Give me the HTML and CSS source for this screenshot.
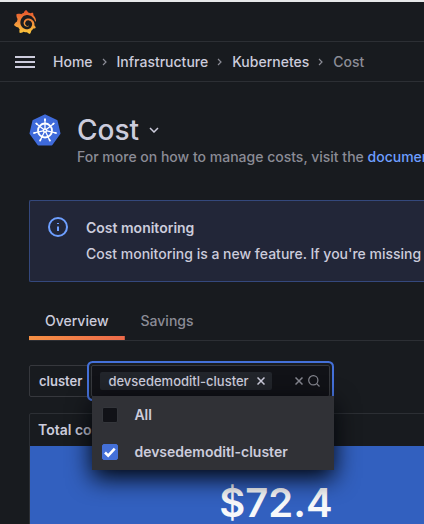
FILE: index.html
```html
<!DOCTYPE html>
<html lang="en">
<head>
<meta charset="utf-8">
<meta name="viewport" content="width=device-width, initial-scale=1">
<title>Cost - Kubernetes - Grafana</title>
<link rel="stylesheet" href="styles.css">
</head>
<body>
<header class="chrome">
  <div class="topbar">
    <a class="brand" href="#" aria-label="Grafana">
      <svg width="24" height="24" viewBox="0 0 351 365">
        <defs><linearGradient id="flame" x1="0" y1="1" x2="0" y2="0"><stop offset="0" stop-color="#fbca3a"/><stop offset="0.45" stop-color="#f3933c"/><stop offset="1" stop-color="#e5502b"/></linearGradient></defs>
        <path fill="url(#flame)" d="M342,161.2c-0.6-6.1-1.6-13.1-3.6-20.9c-2-7.7-5-16.2-9.4-25c-4.4-8.8-10.1-17.9-17.5-26.8c-2.9-3.5-6.1-6.9-9.5-10.2c5.1-20.3-6.2-37.9-6.2-37.9c-19.5-1.2-31.9,6.1-36.5,9.4c-0.8-0.3-1.5-0.7-2.3-1c-3.3-1.3-6.7-2.6-10.3-3.7c-3.5-1.1-7.1-2.1-10.8-3c-3.7-0.9-7.4-1.6-11.2-2.2c-0.7-0.1-1.3-0.2-2-0.3c-8.5-27.2-32.9-38.6-32.9-38.6c-27.3,17.3-32.4,41.5-32.4,41.5s-0.1,0.5-0.3,1.4c-1.5,0.4-3,0.9-4.5,1.3c-2.1,0.6-4.2,1.4-6.2,2.2c-2.1,0.8-4.1,1.6-6.2,2.5c-4.1,1.8-8.2,3.8-12.2,6c-3.9,2.2-7.7,4.6-11.4,7.1c-0.5-0.2-1-0.4-1-0.4c-37.8-14.4-71.3,2.9-71.3,2.9c-3.1,40.2,15.1,65.5,18.7,70.1c-0.9,2.5-1.7,5-2.5,7.5c-2.8,9.1-4.9,18.4-6.2,28.1c-0.2,1.4-0.4,2.8-0.5,4.2C18.8,192.7,8.5,228,8.5,228c29.1,33.5,63.1,35.6,63.1,35.6c0,0,0.1-0.1,0.1-0.1c4.3,7.7,9.3,15,14.9,21.9c2.4,2.9,4.8,5.6,7.4,8.3c-10.6,30.4,1.5,55.6,1.5,55.6c32.4,1.2,53.7-14.2,58.2-17.7c3.2,1.1,6.5,2.1,9.8,2.9c10,2.6,20.2,4.1,30.4,4.5c2.5,0.1,5.1,0.2,7.6,0.1l1.2,0l0.8,0l1.6,0l1.6-0.1l0,0.1c15.3,21.8,42.1,24.9,42.1,24.9c19.1-20.1,20.2-40.1,20.2-44.4l0,0c0,0,0-0.1,0-0.3c0-0.4,0-0.6,0-0.6l0,0c0-0.3,0-0.6,0-0.9c4-2.8,7.8-5.8,11.4-9.1c7.6-6.9,14.3-14.8,19.9-23.3c0.5-0.8,1-1.6,1.5-2.4c21.6,1.2,36.9-13.4,36.9-13.4c-3.6-22.5-16.4-33.5-19.1-35.6c-0.3-0.2-0.7-0.5-1-0.7c0.1-1.4,0.2-2.7,0.3-4.1c0.2-2.4,0.2-4.9,0.2-7.3l0-1.8l0-1.4l-0.1-2.1l-0.1-2c0-0.7-0.1-1.3-0.2-1.9c-0.1-0.6-0.1-1.3-0.2-1.9l-0.2-1.9l-0.3-1.9c-0.4-2.5-0.8-4.9-1.4-7.4c-2.3-9.7-6.1-18.9-11-27.2c-5-8.3-11.2-15.6-18.3-21.8c-7-6.2-14.9-11.2-23.1-14.9c-8.3-3.7-16.9-6.1-25.5-7.2c-4.3-0.6-8.6-0.8-12.9-0.7l-3.2,0l-1.6,0.1c-0.6,0-1.2,0.1-1.7,0.1c-2.2,0.2-4.4,0.5-6.5,0.9c-8.6,1.6-16.7,4.7-23.8,9c-7.1,4.3-13.3,9.6-18.3,15.6c-5,6-8.9,12.7-11.6,19.6c-2.7,6.9-4.2,14.1-4.6,21c-0.1,1.7-0.1,3.5-0.1,5.2l0.1,2.7c0.1,0.8,0.1,1.7,0.2,2.5c0.3,3.5,1,6.9,1.9,10.1c1.9,6.5,4.9,12.4,8.6,17.4c3.7,5,8.2,9.1,12.9,12.4c4.7,3.2,9.8,5.5,14.8,7c5,1.5,10,2.1,14.7,2.1c3,0,6-0.2,9-0.9c4-0.9,8-2.2,11.5-4.1c1.8-0.9,3.4-2,5-3c0.4-0.3,0.9-0.6,1.3-1c1.6-1.3,1.9-3.7,0.6-5.3c-1.1-1.4-3.1-1.8-4.7-0.9c-0.4,0.2-0.8,0.4-1.2,0.6c-1.4,0.7-2.8,1.3-4.3,1.8c-1.5,0.5-3.1,0.9-4.7,1.2c-3,0.4-6,0.5-9,0.2c-3.7-0.5-7.4-1.6-10.9-3.2c-3.6-1.6-7-3.8-10.1-6.6c-3.1-2.8-5.8-6.1-7.9-9.9c-2.1-3.8-3.6-8-4.3-12.4c-0.3-2.2-0.5-4.5-0.4-6.7c0.1-2.4,0.4-4.8,0.8-7.1c1.7-9.6,6.5-19,13.9-26.1c1.9-1.8,3.9-3.4,6-4.9c2.1-1.5,4.4-2.8,6.8-3.9c2.4-1.1,4.8-2,7.4-2.7c2.5-0.7,5.1-1.1,7.8-1.4c3-0.2,5.5-0.2,8.2-0.1c2.9,0.2,5.7,0.6,8.5,1.3c5.6,1.2,11.1,3.3,16.2,6.1c10.2,5.7,18.9,14.5,24.2,25.1c2.7,5.3,4.6,11,5.5,16.9c0.6,4.6,0.8,8.8,0.6,13.5c-0.1,1.6-0.3,3.3-0.5,4.9c-0.2,1.6-0.5,3.2-0.8,4.8c-0.3,1.6-0.7,3.2-1.1,4.7c-0.8,3.1-1.8,6.2-3,9.3c-2.4,6-5.6,11.8-9.4,17.1c-7.7,10.6-18.2,19.2-30.2,24.7c-6,2.7-12.3,4.7-18.8,5.7c-6,1-12,1.2-20,0.7c-7-0.5-13.9-1.8-20.7-3.7c-6.7-1.9-13.2-4.6-19.4-7.8c-12.3-6.6-23.4-15.6-32-26.5c-4.3-5.4-8.1-11.3-11.2-17.4c-3.1-6.1-5.6-12.6-7.4-19.1c-1.8-6.6-2.9-13.3-3.4-20.1c-0.4-7-0.2-13.5,0.7-21c0.4-3.4,1-6.9,1.7-10.3c0.7-3.4,1.5-6.8,2.5-10.2c1.9-6.7,4.3-13.2,7.1-19.3c5.7-12.2,13.1-23.1,22-31.8c2.2-2.2,4.5-4.2,6.9-6.2c2.4-1.9,4.9-3.7,7.5-5.4c2.5-1.7,5.2-3.2,7.9-4.6c8-4,17-7.300,26-9.200c8-1.7,15.500-2.500,25-2.700c5.8,0.2,11.5,0.9,17,1.9c11.1,2.1,21.5,5.6,31,10.3c9.5,4.6,17.9,10.3,25.3,16.5c8,7,14,13.500,18.800,20.100c5.2,6.7,9.4,13.5,12.7,19.9c3,6,5.500,12,7.700,18c1.5,4.4,2.6,8.3,3.5,11.7c0.3,1.4,1.6,2.3,3,2.1c1.5-0.1,2.6-1.3,2.6-2.8C342.6,170.4,342.5,166.1,342,161.2z"/>
      </svg>
    </a>
  </div>
  <div class="navbar">
    <button class="menu-toggle" type="button" aria-label="Open menu"><span></span><span></span><span></span></button>
    <nav class="crumbs" aria-label="Breadcrumbs">
      <a href="#">Home</a>
      <svg class="sep" viewBox="0 0 6 8"><path d="M1 1l3 3-3 3"/></svg>
      <a href="#">Infrastructure</a>
      <svg class="sep" viewBox="0 0 6 8"><path d="M1 1l3 3-3 3"/></svg>
      <a href="#">Kubernetes</a>
      <svg class="sep" viewBox="0 0 6 8"><path d="M1 1l3 3-3 3"/></svg>
      <span class="current" aria-current="page">Cost</span>
    </nav>
  </div>
</header>

<main class="page">
  <div class="page-head">
    <svg class="k8s" viewBox="0 0 32 32" aria-hidden="true">
      <path fill="#3f6bdb" stroke="#3f6bdb" stroke-width="2" stroke-linejoin="round" d="M16 1.300L27.600 6.900 30.500 19.500 22.600 30.500H9.400L1.500 19.500 4.400 6.900z"/>
      <g fill="none" stroke="#fff" stroke-linecap="round">
        <circle cx="16" cy="16.500" r="7" stroke-width="1.800"/>
        <g id="spoke"><path stroke-width="1.300" d="M16 14.500V5.500"/><path stroke-width="1.700" d="M16 6.300V5.200"/></g>
        <use href="#spoke" transform="rotate(51.430 16 16.500)"/>
        <use href="#spoke" transform="rotate(102.860 16 16.500)"/>
        <use href="#spoke" transform="rotate(154.290 16 16.500)"/>
        <use href="#spoke" transform="rotate(205.710 16 16.500)"/>
        <use href="#spoke" transform="rotate(257.140 16 16.500)"/>
        <use href="#spoke" transform="rotate(308.570 16 16.500)"/>
      </g>
      <circle cx="16" cy="16.500" r="2.200" fill="#fff"/><circle cx="16" cy="16.500" r="0.800" fill="#3f6bdb"/>
    </svg>
    <div class="heading">
      <div class="title-row">
        <h1>Cost</h1>
        <button class="icon-btn" type="button" aria-label="Switch page"><svg width="10" height="6" viewBox="0 0 10 6"><path d="M1 1l4 4 4-4"/></svg></button>
      </div>
      <p class="subtitle">For more on how to manage costs, visit the <a href="#">documentation</a></p>
    </div>
  </div>

  <section class="alert" role="status">
    <svg class="info" viewBox="0 0 20 20" aria-hidden="true"><circle cx="10" cy="10" r="9"/><path d="M10 9.500v4.500M10 6v1"/></svg>
    <div>
      <h2>Cost monitoring</h2>
      <p>Cost monitoring is a new feature. If you're missing</p>
    </div>
  </section>

  <nav class="tabs" aria-label="Cost views">
    <a class="tab active" href="#" aria-current="true">Overview</a>
    <a class="tab" href="#">Savings</a>
  </nav>

  <div class="variable">
    <label class="var-label" for="cluster">cluster</label>
    <div class="select">
      <div class="control">
        <span class="chip">devsedemoditl-cluster<button class="icon-btn" type="button" aria-label="Remove devsedemoditl-cluster"><svg width="8" height="8" viewBox="0 0 8 8"><path d="M0.500 0.500l7 7M7.500 0.500l-7 7"/></svg></button></span>
        <input id="cluster" class="search" type="text" autocomplete="off">
        <button class="icon-btn muted" type="button" aria-label="Clear"><svg width="8" height="8" viewBox="0 0 8 8"><path d="M0.500 0.500l7 7M7.500 0.500l-7 7"/></svg></button>
        <svg class="magnifier" viewBox="0 0 12 12" aria-hidden="true"><circle cx="5.300" cy="5.300" r="4.600"/><path d="M8.700 8.700l2.800 2.800"/></svg>
      </div>
      <div class="menu">
        <label class="option"><input type="checkbox">All</label>
        <label class="option"><input type="checkbox" checked>devsedemoditl-cluster</label>
      </div>
    </div>
  </div>

  <section class="panel">
    <h2>Total cost</h2>
    <div class="stat">$72.4</div>
  </section>
</main>
</body>
</html>
```

FILE: styles.css
```css
:root {
  --bg: #181b1f;
  --line: #2c2f34;
  --text: #ccccdc;
  --muted: #8b8c96;
  --blue: #4470d8;
  --field: #111217;
}

* { box-sizing: border-box; }

body {
  margin: 0;
  min-height: 100vh;
  overflow: hidden;
  background: var(--bg);
  color: var(--text);
  font: 500 14px/22px Inter, "Liberation Sans", sans-serif;
  border-top: 2px solid #e6e8e9;
}

h1, h2, p { margin: 0; font-weight: 500; }
h2 { font-size: 14px; line-height: 22px; font-weight: 600; }
a { color: inherit; text-decoration: none; }
button { padding: 0; border: 0; background: none; color: inherit; }
svg { display: block; flex: none; }

.topbar, .navbar {
  display: flex;
  align-items: center;
  height: 40px;
  border-bottom: 1px solid var(--line);
}
.topbar { padding-left: 13px; }
.navbar { padding-left: 15px; gap: 18px; }

.menu-toggle { display: grid; gap: 3px; width: 20px; }
.menu-toggle span { height: 2px; background: var(--text); }

.crumbs { display: flex; align-items: center; white-space: nowrap; }
.crumbs .current { color: var(--muted); }
.sep { width: 6px; height: 8px; margin: 0 9px; fill: none; stroke: #8b8c96; stroke-width: 1.2; }

.page { padding: 32px 0 0 29px; }

.page-head { display: flex; gap: 16px; }
.k8s { width: 32px; height: 32px; }
.title-row { display: flex; align-items: center; gap: 10px; }
h1 { font-size: 28px; line-height: 32px; }
.icon-btn svg { fill: none; stroke: currentColor; stroke-width: 1.5; }
.subtitle { white-space: nowrap; color: var(--muted); }
.subtitle a { color: #6e9fff; }

.alert {
  display: flex;
  gap: 18px;
  margin-top: 32px;
  padding: 16px 18px;
  border: 1px solid #34487c;
  border-right: 0;
  border-radius: 2px 0 0 2px;
  background: #222638;
  white-space: nowrap;
}
.alert p { margin: 4px 0 0; }
.info { width: 20px; height: 20px; fill: none; stroke: #6e9fff; stroke-width: 2; }

.tabs { display: flex; margin-top: 18px; border-bottom: 1px solid var(--line); }
.tab { padding: 10px 16px 8px; color: var(--muted); }
.tab.active {
  color: var(--text);
  background: linear-gradient(90deg, #f59044, #ec6a4a) bottom / 100% 4px no-repeat;
}

.variable { display: flex; margin-top: 24px; }
.var-label {
  height: 32px;
  padding: 4px 8px 4px 9px;
  border: 1px solid #36383d;
  border-radius: 2px;
  font-size: 13px;
  font-weight: 600;
}

.select { position: relative; width: 239px; }
.control {
  display: flex;
  align-items: center;
  height: 32px;
  padding: 0 9px 0 8px;
  border: 1px solid #36383d;
  border-radius: 2px;
  background: var(--field);
  box-shadow: 0 0 0 2px var(--bg), 0 0 0 4px var(--blue);
}
.chip {
  display: flex;
  align-items: center;
  gap: 8px;
  height: 18px;
  padding: 0 7px 0 8px;
  border-radius: 2px;
  background: #22252b;
  font-size: 13px;
}
.search { flex: 1; width: 0; min-width: 0; padding: 0; border: 0; outline: 0; background: none; color: inherit; font: inherit; }
.muted { color: #85868f; }
.magnifier { width: 12px; height: 12px; margin-left: 5px; fill: none; stroke: #85868f; stroke-width: 1.2; }

.menu {
  position: absolute;
  z-index: 1;
  top: 31px;
  left: 1px;
  width: 242px;
  background: #303136;
  box-shadow: 0 8px 24px #010409;
}
.option { display: flex; align-items: center; gap: 16px; height: 37px; padding: 0 10px; font-weight: 600; }
.option input {
  appearance: none;
  width: 16px;
  height: 16px;
  margin: 0;
  border: 1px solid #34363b;
  border-radius: 2px;
  background: var(--field);
}
.option input:checked {
  border-color: var(--blue);
  background: var(--blue) url("data:image/svg+xml,%3Csvg xmlns='http://www.w3.org/2000/svg' viewBox='0 0 14 14'%3E%3Cpath d='M2 7.500l3.200 3.200 6.500-7' fill='none' stroke='%23fff' stroke-width='2.600'/%3E%3C/svg%3E");
}

.panel {
  min-width: 494px;
  margin-top: 16px;
  border: 1px solid var(--line);
  border-radius: 2px;
}
.panel h2 { padding: 5px 8px; }
.stat {
  padding: 33px 0 48px;
  background: #3260bf;
  color: #f7f8fa;
  font-size: 40px;
  font-weight: 600;
  line-height: 48px;
  text-align: center;
}
```
